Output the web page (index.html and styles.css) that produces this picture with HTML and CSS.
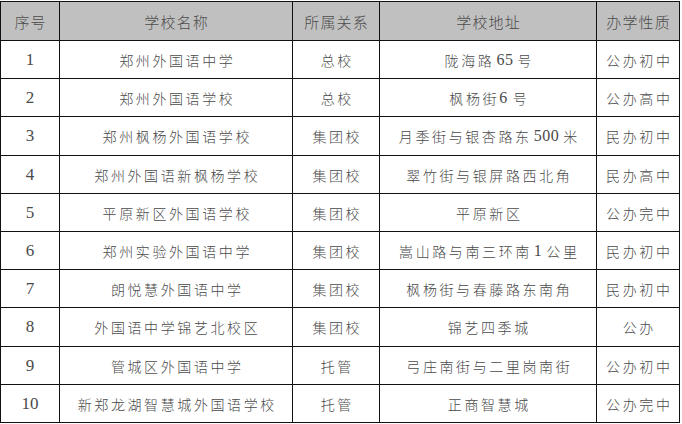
FILE: index.html
```html
<!DOCTYPE html>
<html lang="zh-CN">
<head>
<meta charset="utf-8">
<title>郑州外国语学校</title>
<link rel="stylesheet" href="styles.css">
</head>
<body>
<div class="table">
  <div class="cell head">序号</div>
  <div class="cell head">学校名称</div>
  <div class="cell head">所属关系</div>
  <div class="cell head">学校地址</div>
  <div class="cell head">办学性质</div>

  <div class="cell num">1</div>
  <div class="cell">郑州外国语中学</div>
  <div class="cell">总校</div>
  <div class="cell">陇海路<span class="d">65</span>号</div>
  <div class="cell">公办初中</div>

  <div class="cell num">2</div>
  <div class="cell">郑州外国语学校</div>
  <div class="cell">总校</div>
  <div class="cell">枫杨街<span class="d d-tight">6</span>号</div>
  <div class="cell">公办高中</div>

  <div class="cell num">3</div>
  <div class="cell">郑州枫杨外国语学校</div>
  <div class="cell">集团校</div>
  <div class="cell">月季街与银杏路东<span class="d">500</span>米</div>
  <div class="cell">民办初中</div>

  <div class="cell num">4</div>
  <div class="cell">郑州外国语新枫杨学校</div>
  <div class="cell">集团校</div>
  <div class="cell">翠竹街与银屏路西北角</div>
  <div class="cell">民办高中</div>

  <div class="cell num">5</div>
  <div class="cell">平原新区外国语学校</div>
  <div class="cell">集团校</div>
  <div class="cell">平原新区</div>
  <div class="cell">公办完中</div>

  <div class="cell num">6</div>
  <div class="cell">郑州实验外国语中学</div>
  <div class="cell">集团校</div>
  <div class="cell">嵩山路与南三环南<span class="d">1</span>公里</div>
  <div class="cell">民办初中</div>

  <div class="cell num">7</div>
  <div class="cell">朗悦慧外国语中学</div>
  <div class="cell">集团校</div>
  <div class="cell">枫杨街与春藤路东南角</div>
  <div class="cell">民办初中</div>

  <div class="cell num">8</div>
  <div class="cell">外国语中学锦艺北校区</div>
  <div class="cell">集团校</div>
  <div class="cell">锦艺四季城</div>
  <div class="cell">公办</div>

  <div class="cell num">9</div>
  <div class="cell">管城区外国语中学</div>
  <div class="cell">托管</div>
  <div class="cell">弓庄南街与二里岗南街</div>
  <div class="cell">公办初中</div>

  <div class="cell num">10</div>
  <div class="cell">新郑龙湖智慧城外国语学校</div>
  <div class="cell">托管</div>
  <div class="cell">正商智慧城</div>
  <div class="cell">公办完中</div>
</div>
</body>
</html>
```

FILE: styles.css
```css
html, body {
  margin: 0;
  padding: 0;
  background: #ffffff;
}

body {
  font-family: "Liberation Serif", "Noto Sans CJK SC", serif;
  color: #4a4a4a;
}

.table {
  display: grid;
  grid-template-columns: 58px 232px 86px 216px 82px;
  grid-template-rows: 38px 37px 37px 38px 37px 37px 37px 37px 38px 37px 37px;
  gap: 1px;
  padding: 1px;
  background: #111111;
  width: max-content;
  margin-top: 1px;
}

.cell {
  background: #ffffff;
  display: flex;
  align-items: center;
  justify-content: center;
  font-size: 14px;
  font-weight: 300;
  letter-spacing: 2.6px;
  padding-left: 2.6px;
  white-space: nowrap;
}

.head {
  background: #c0c0c0;
  font-size: 15px;
  letter-spacing: 1.2px;
  padding-left: 1.2px;
  color: #4c4c4c;
}

.num {
  font-size: 17px;
  letter-spacing: 0;
  padding-left: 0;
  font-weight: 400;
}

.d {
  font-size: 16px;
  font-weight: 400;
  letter-spacing: 0.5px;
  margin: 0 4px 0 2px;
}

.d-tight {
  margin: 0 5px 0 0;
}
```
